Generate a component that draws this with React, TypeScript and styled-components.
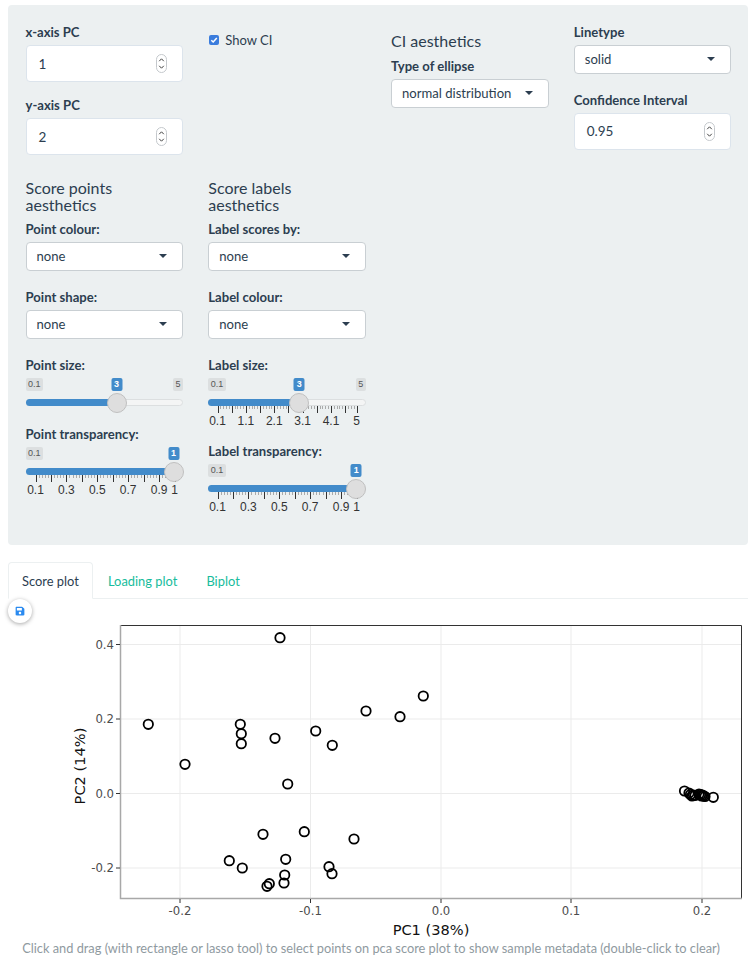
import { createGlobalStyle, styled } from "styled-components";
import { FaSave } from "react-icons/fa";

const GlobalStyle = createGlobalStyle`
  html, body {
    margin: 0;
    padding: 0;
    background: #fff;
    overflow: hidden;
  }
  body {
    font-family: Lato, "Liberation Sans", sans-serif;
    color: #2c3e50;
  }
`;

const Page = styled.div`
  width: 752px;
  height: 955px;
  padding: 5px 4px 0 8px;
  box-sizing: border-box;
  overflow: hidden;
`;

const Well = styled.div`
  display: grid;
  grid-template-columns: repeat(4, 157.5px);
  column-gap: 25.25px;
  row-gap: 24px;
  align-items: start;
  align-content: start;
  background: #ecf0f1;
  border-radius: 4px;
  padding: 18px 15px 16px 17.5px;
  height: 540px;
  box-sizing: border-box;
`;

const Column = styled.div`
  display: flex;
  flex-direction: column;
`;

const Field = styled.div<{ $gap?: number }>`
  display: flex;
  flex-direction: column;
  margin-bottom: ${(p) => p.$gap ?? 0}px;
`;

const Label = styled.label`
  font-size: 13.1px;
  font-weight: 700;
  line-height: 18px;
  margin-bottom: 4px;
`;

const Heading = styled.div`
  font-size: 16px;
  line-height: 17px;
  margin-bottom: 7px;
`;

const NumberBox = styled.div`
  display: flex;
  align-items: center;
  justify-content: space-between;
  height: 37px;
  box-sizing: border-box;
  padding: 0 15px 0 12px;
  background: #fff;
  border: 1px solid #dce4ec;
  border-radius: 4px;
  font-size: 13.5px;
`;

const SelectBox = styled.div`
  display: flex;
  align-items: center;
  justify-content: space-between;
  height: 29px;
  box-sizing: border-box;
  padding: 0 15px 1px 10px;
  background: #fff;
  border: 1px solid #c9cfd3;
  border-radius: 4px;
  font-size: 13.1px;
`;

const Caret = styled.span`
  width: 0;
  height: 0;
  margin-bottom: 1px;
  border-left: 4px solid transparent;
  border-right: 4px solid transparent;
  border-top: 4px solid #2c3e50;
`;

const CheckRow = styled.div`
  display: flex;
  align-items: center;
  gap: 6px;
  height: 18px;
  margin-top: 8px;
  font-size: 13px;
`;

const CheckMark = styled.span`
  display: flex;
  align-items: center;
  justify-content: center;
  width: 10px;
  height: 10px;
  margin-left: 1px;
  background: #3b7ddd;
  border-radius: 2px;
`;

const CIHeading = styled(Heading)`
  margin-top: 9px;
  margin-bottom: 8px;
`;

const SliderWrap = styled.div<{ $grid: boolean }>`
  position: relative;
  height: ${(p) => (p.$grid ? 61 : 43)}px;
`;

const EndLabels = styled.div`
  display: flex;
  justify-content: space-between;
  height: 21px;
`;

const EndLabel = styled.span`
  height: 13px;
  padding: 0 2.5px;
  border-radius: 2px;
  background: #dcdfe0;
  color: #555;
  font: 9px/13px "Liberation Sans", sans-serif;
`;

const ValueBubble = styled.span`
  position: absolute;
  top: 0;
  height: 13px;
  padding: 0 3px;
  transform: translateX(-50%);
  border-radius: 2px;
  background: #428bca;
  color: #fff;
  font: 700 9px/13px "Liberation Sans", sans-serif;
`;

const Track = styled.div`
  position: relative;
  height: 7px;
  box-sizing: border-box;
  border: 1px solid #dcdfe0;
  border-radius: 4px;
  background: #f4f5f5;
`;

const TrackFill = styled.div`
  height: 7px;
  margin: -1px 0 0 -1px;
  border-radius: 4px 0 0 4px;
  background: #428bca;
`;

const Handle = styled.span`
  position: absolute;
  top: -7px;
  width: 18px;
  height: 18px;
  transform: translateX(-50%);
  border: 1px solid #c0c0c0;
  border-radius: 50%;
  background: #dedede;
`;

const Scale = styled.svg`
  display: block;
  overflow: visible;
`;

const Tabs = styled.div`
  display: flex;
  align-items: flex-end;
  height: 36px;
  margin-top: 17px;
  border-bottom: 1px solid #ecf0f1;
`;

const Tab = styled.div<{ $active?: boolean }>`
  height: 37px;
  box-sizing: border-box;
  margin-bottom: -1px;
  padding: 0 13px;
  margin-right: 1px;
  display: flex;
  align-items: center;
  font-size: 12.9px;
  border: 1px solid ${(p) => (p.$active ? "#ecf0f1" : "transparent")};
  border-bottom-color: ${(p) => (p.$active ? "#fff" : "transparent")};
  border-radius: 4px 4px 0 0;
  color: ${(p) => (p.$active ? "#2c3e50" : "#18bc9c")};
`;

const PlotArea = styled.div`
  position: relative;
`;

const SaveButton = styled.div`
  position: absolute;
  top: 0;
  left: 0;
  display: flex;
  align-items: center;
  justify-content: center;
  width: 24px;
  height: 24px;
  border-radius: 50%;
  background: #fff;
  color: #2a8af0;
  font-size: 10px;
  box-shadow: 0 1px 4px rgba(0, 0, 0, 0.35);
`;

const Plot = styled.svg`
  display: block;
`;

const Caption = styled.text`
  font-family: Lato, "Liberation Sans", sans-serif;
  font-size: 12.8px;
  fill: #8f9a9f;
`;

const TickText = styled.text`
  font-family: "DejaVu Sans", sans-serif;
  font-size: 11.7px;
  fill: #4d4d4d;
`;

const AxisTitle = styled.text`
  font-family: "DejaVu Sans", sans-serif;
  font-size: 14.6px;
  fill: #111;
`;

const xTicks = [
  { x: 180, t: "-0.2" },
  { x: 310.5, t: "-0.1" },
  { x: 441, t: "0.0" },
  { x: 571, t: "0.1" },
  { x: 702, t: "0.2" },
];
const yTicks = [
  { y: 644.5, t: "0.4" },
  { y: 719, t: "0.2" },
  { y: 793.5, t: "0.0" },
  { y: 868, t: "-0.2" },
];

const points = [
  [280, 637.7], [423.3, 696], [366, 711], [400, 716.7], [148.3, 724.3], [240.3, 724.3],
  [241.3, 733.7], [241.3, 743.7], [275, 738.3], [315.7, 731], [332.3, 745.3], [185, 764.3],
  [287.7, 784], [263, 834.3], [304.3, 831.7], [354, 839], [229.3, 860.7], [242.3, 868],
  [285.7, 859.3], [329, 866.7], [332, 873.7], [284.7, 875], [284, 883], [269.3, 883.7],
  [267, 886.3], [684.5, 791], [689, 793], [690.5, 794.5], [692, 796], [693.5, 795],
  [695, 795.5], [699, 794], [700.5, 794.5], [701.5, 796], [702.5, 795], [703.5, 796],
  [705, 796.5], [713.3, 797.3],
];

function Spinner() {
  return (
    <svg width="11" height="19" viewBox="0 0 11 19">
      <rect x="0.5" y="0.5" width="10" height="18" rx="5" fill="#fff" stroke="#c4c8cc" />
      <path d="M3.2 7.2 5.5 4.8 7.8 7.2M3.2 11.8 5.5 14.2 7.8 11.8" fill="none" stroke="#444" strokeWidth="1" />
    </svg>
  );
}

function NumberField({ label, value, gap }: { label: string; value: string; gap?: number }) {
  return (
    <Field $gap={gap}>
      <Label>{label}</Label>
      <NumberBox>
        <span>{value}</span>
        <Spinner />
      </NumberBox>
    </Field>
  );
}

function SelectField({ label, value, gap }: { label: string; value: string; gap?: number }) {
  return (
    <Field $gap={gap}>
      <Label>{label}</Label>
      <SelectBox>
        <span>{value}</span>
        <Caret />
      </SelectBox>
    </Field>
  );
}

type Grid = { min: number; max: number; step: number; labels: number[] };

function SliderScale({ grid }: { grid: Grid }) {
  const left = 9.5;
  const span = 139;
  const pos = (v: number) => left + ((v - grid.min) / (grid.max - grid.min)) * span;
  const ticks: { x: number; major: boolean }[] = [];
  const steps = Math.round((grid.max - grid.min) / grid.step);
  for (let i = 0; i <= steps; i++) {
    const v = Math.min(grid.min + i * grid.step, grid.max);
    ticks.push({ x: Math.round(pos(v)) + 0.5, major: true });
    for (let j = 1; j < 5; j++) {
      const m = v + (j * grid.step) / 5;
      if (m < grid.max) ticks.push({ x: Math.round(pos(m)) + 0.5, major: false });
    }
  }
  return (
    <Scale width="157" height="22">
      {ticks.map((t, i) => (
        <line
          key={i}
          x1={t.x}
          x2={t.x}
          y1="0"
          y2={t.major ? 7 : 3}
          stroke={t.major ? "#333" : "#aaa"}
          strokeWidth="1"
        />
      ))}
      {grid.labels.map((v) => (
        <text
          key={v}
          x={pos(v)}
          y="19"
          textAnchor="middle"
          fontFamily="'Liberation Sans', sans-serif"
          fontSize="12"
          fill="#333"
        >
          {v}
        </text>
      ))}
    </Scale>
  );
}

function SliderField({
  label,
  min,
  max,
  value,
  grid,
  gap,
}: {
  label: string;
  min: number;
  max: number;
  value: number;
  grid?: Grid;
  gap?: number;
}) {
  const frac = (value - min) / (max - min);
  const center = 8.5 + frac * 139.5;
  return (
    <Field $gap={gap}>
      <Label>{label}</Label>
      <SliderWrap $grid={!!grid}>
        <EndLabels>
          <EndLabel>{min}</EndLabel>
          {frac < 1 && <EndLabel>{max}</EndLabel>}
        </EndLabels>
        <ValueBubble style={{ left: center }}>{value}</ValueBubble>
        <Track>
          <TrackFill style={{ width: center }} />
          <Handle style={{ left: center - 1 }} />
        </Track>
        {grid && <SliderScale grid={grid} />}
      </SliderWrap>
    </Field>
  );
}

const sizeGrid: Grid = { min: 0.1, max: 5, step: 0.5, labels: [0.1, 1.1, 2.1, 3.1, 4.1, 5] };
const alphaGrid: Grid = { min: 0.1, max: 1, step: 0.1, labels: [0.1, 0.3, 0.5, 0.7, 0.9, 1] };

export default function App() {
  return (
    <Page>
      <GlobalStyle />
      <Well>
        <Column>
          <NumberField label="x-axis PC" value="1" gap={14} />
          <NumberField label="y-axis PC" value="2" />
        </Column>
        <Column>
          <CheckRow>
            <CheckMark>
              <svg width="8" height="8" viewBox="0 0 8 8">
                <path d="M1.3 4.2 3.2 6 6.8 2" fill="none" stroke="#fff" strokeWidth="1.5" />
              </svg>
            </CheckMark>
            Show CI
          </CheckRow>
        </Column>
        <Column>
          <CIHeading>CI aesthetics</CIHeading>
          <SelectField label="Type of ellipse" value="normal distribution" />
        </Column>
        <Column>
          <SelectField label="Linetype" value="solid" gap={16.5} />
          <NumberField label="Confidence Interval" value="0.95" />
        </Column>
        <Column>
          <Heading>
            Score points
            <br />
            aesthetics
          </Heading>
          <SelectField label="Point colour:" value="none" gap={17} />
          <SelectField label="Point shape:" value="none" gap={17} />
          <SliderField label="Point size:" min={0.1} max={5} value={3} gap={4} />
          <SliderField label="Point transparency:" min={0.1} max={1} value={1} grid={alphaGrid} />
        </Column>
        <Column>
          <Heading>
            Score labels
            <br />
            aesthetics
          </Heading>
          <SelectField label="Label scores by:" value="none" gap={17} />
          <SelectField label="Label colour:" value="none" gap={17} />
          <SliderField label="Label size:" min={0.1} max={5} value={3} grid={sizeGrid} gap={3} />
          <SliderField label="Label transparency:" min={0.1} max={1} value={1} grid={alphaGrid} />
        </Column>
      </Well>
      <Tabs>
        <Tab $active>Score plot</Tab>
        <Tab>Loading plot</Tab>
        <Tab>Biplot</Tab>
      </Tabs>
      <PlotArea>
        <SaveButton>
          <FaSave />
        </SaveButton>
        <Plot width="740" height="356" viewBox="8 599 740 356">
          {xTicks.map((t) => (
            <line key={t.t} x1={t.x} x2={t.x} y1="625" y2="898" stroke="#ebebeb" />
          ))}
          {yTicks.map((t) => (
            <line key={t.t} x1="121" x2="742" y1={t.y} y2={t.y} stroke="#ebebeb" />
          ))}
          <path d="M121 625.5H741.5V898" fill="none" stroke="#333" />
          <path d="M120.5 625V898.5H742" fill="none" stroke="#a8a8a8" strokeWidth="1.5" />
          {points.map(([x, y], i) => (
            <circle key={i} cx={x} cy={y} r="4.7" fill="none" stroke="#000" strokeWidth="1.8" />
          ))}
          {xTicks.map((t) => (
            <g key={t.t}>
              <line x1={t.x} x2={t.x} y1="899" y2="903" stroke="#333" />
              <TickText x={t.x} y="915" textAnchor="middle">
                {t.t}
              </TickText>
            </g>
          ))}
          {yTicks.map((t) => (
            <g key={t.t}>
              <line x1="116" x2="120" y1={t.y} y2={t.y} stroke="#333" />
              <TickText x="114" y={t.y + 4} textAnchor="end">
                {t.t}
              </TickText>
            </g>
          ))}
          <AxisTitle x="431" y="935" textAnchor="middle">
            PC1 (38%)
          </AxisTitle>
          <AxisTitle x="85" y="766" textAnchor="middle" transform="rotate(-90 85 766)">
            PC2 (14%)
          </AxisTitle>
          <Caption x="371" y="953" textAnchor="middle">
            Click and drag (with rectangle or lasso tool) to select points on pca score plot to show sample metadata (double-click to clear)
          </Caption>
        </Plot>
      </PlotArea>
    </Page>
  );
}
